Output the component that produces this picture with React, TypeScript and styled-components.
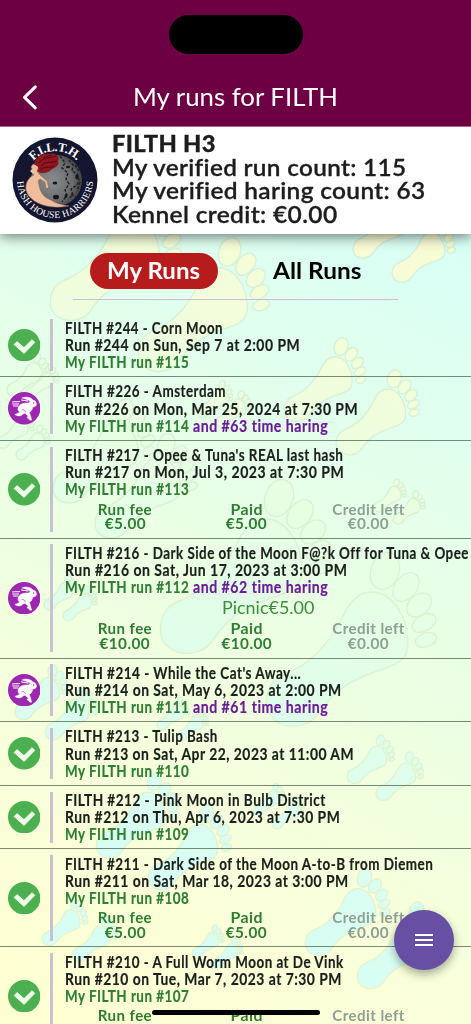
import React, { useLayoutEffect, useRef, useState } from 'react';
import styled, { createGlobalStyle } from 'styled-components';

const GlobalStyle = createGlobalStyle`
  * {
    box-sizing: border-box;
  }

  body {
    margin: 0;
    font-family: Lato, 'Open Sans', sans-serif;
    font-variant-ligatures: none;
    color: #1d1d1d;
  }
`;

const Screen = styled.div`
  position: relative;
  height: 1024px;
  overflow: hidden;
  display: flex;
  flex-direction: column;
  background: linear-gradient(207deg, #d2fffb 8%, #dffff0 32%, #ecffe2 58%, #f9ffda 80%, #ffffd2 98%);
`;

const Backdrop = styled.svg`
  position: absolute;
  top: 0;
  left: 0;
  width: 471px;
  height: 1024px;
`;

const TopBar = styled.header`
  position: relative;
  z-index: 2;
  flex: none;
  height: 127px;
  padding-top: 15px;
  display: flex;
  flex-direction: column;
  align-items: center;
  background: #6d0042;
  border-bottom: 1px solid #a2608a;
`;

const Island = styled.div`
  width: 134px;
  height: 39px;
  border-radius: 20px;
  background: #000;
`;

const NavRow = styled.div`
  width: 100%;
  margin-top: 18.5px;
  height: 48px;
  display: grid;
  grid-template-columns: 60px 1fr 60px;
  align-items: center;
  justify-items: center;
`;

const NavTitle = styled.h1`
  margin: 0;
  font-size: 24.5px;
  font-weight: 400;
  line-height: 30px;
  color: #fff;
`;

const BackIcon = styled.svg`
  width: 20px;
  height: 28px;
  fill: none;
  stroke: #fff;
  stroke-width: 3;
  stroke-linecap: round;
  stroke-linejoin: round;
`;

const Summary = styled.section`
  position: relative;
  z-index: 1;
  flex: none;
  height: 107px;
  padding: 0 12px;
  display: flex;
  align-items: center;
  gap: 14px;
  background: #fff;
  box-shadow: 0 3px 12px rgba(0, 0, 0, 0.5);
`;

const Logo = styled.svg`
  width: 86px;
  height: 86px;
  margin-top: -1px;
  flex: none;
`;

const SummaryText = styled.div`
  padding-bottom: 2.4px;
  display: flex;
  flex-direction: column;
`;

const SummaryLine = styled.div<{ $strong?: boolean }>`
  height: 23.6px;
  line-height: 23.6px;
  font-size: ${({ $strong }) => ($strong ? '23.5px' : '22.5px')};
  font-weight: ${({ $strong }) => ($strong ? 900 : 600)};
  letter-spacing: 0.3px;
  -webkit-text-stroke: ${({ $strong }) => ($strong ? '0.3px' : '0.3px')};
`;

const Tabs = styled.nav`
  position: relative;
  flex: none;
  width: 325px;
  height: 66px;
  margin: 0 auto 13.6px 73px;
  padding: 19px 17px 0;
  display: flex;
  gap: 36px;
  border-bottom: 1px solid #cdbfd6;
`;

const Tab = styled.button<{ $active?: boolean }>`
  height: 36px;
  width: ${({ $active }) => ($active ? '128px' : '126px')};
  padding: 0 0 2px;
  display: flex;
  align-items: center;
  justify-content: ${({ $active }) => ($active ? 'center' : 'flex-start')};
  padding-left: ${({ $active }) => ($active ? '0' : '19px')};
  border: 0;
  border-radius: 18px;
  background: ${({ $active }) => ($active ? '#b71c1c' : 'transparent')};
  color: ${({ $active }) => ($active ? '#fff' : '#000')};
  font: 700 23px/30px Lato, sans-serif;
`;

const RunList = styled.ul`
  position: relative;
  list-style: none;
  margin: 0;
  padding: 0;
`;

const RunRow = styled.li`
  padding: 5.7px 0 5.5px;
  display: grid;
  grid-template-columns: 50.4px 2.4px 1fr;
  align-items: center;
  border-bottom: 1px solid rgba(40, 60, 40, 0.6);
`;

const StatusIcon = styled.svg`
  width: 32.4px;
  height: 32.4px;
  margin-left: 8.1px;
`;

const Rule = styled.div`
  align-self: stretch;
  background: #c8c1cf;
`;

const RunBody = styled.div`
  padding-left: 11.8px;
  margin: -0.5px 0 0.5px;
`;

const RunLine = styled.div`
  height: 17.15px;
  line-height: 17.15px;
  font-size: 16.8px;
  font-weight: 700;
  letter-spacing: 0.6px;
  -webkit-text-stroke: 0.2px;
  color: #1b1f1b;
`;

const RunCount = styled.span`
  color: #2e7d32;
`;

const HareCount = styled.span`
  margin-left: 4px;
  color: #6a1b9a;
`;

const Extra = styled.div`
  height: 22px;
  padding-top: 1.5px;
  line-height: 22px;
  font-size: 16.8px;
  font-weight: 400;
  text-align: center;
  color: #388e3c;
`;

const Fees = styled.div`
  width: 365px;
  margin: 5.1px 0 0 -0.4px;
  display: grid;
  grid-template-columns: repeat(3, 1fr);
`;

const Fee = styled.div<{ $muted?: boolean }>`
  display: flex;
  flex-direction: column;
  align-items: center;
  height: 29.2px;
  font-size: 14.4px;
  line-height: 14.8px;
  font-weight: 700;
  letter-spacing: 0.4px;
  color: ${({ $muted }) => ($muted ? '#8f9f93' : '#2e7d32')};
`;

const MenuButton = styled.button`
  position: absolute;
  z-index: 3;
  left: 394px;
  top: 910px;
  width: 60px;
  height: 60px;
  padding: 0;
  display: grid;
  place-items: center;
  border: 0;
  border-radius: 50%;
  background: #6750a4;
  box-shadow: 0 4px 10px rgba(0, 0, 0, 0.35);
`;

const HomeIndicator = styled.div`
  position: absolute;
  z-index: 4;
  left: 152px;
  top: 1010px;
  width: 168px;
  height: 5px;
  border-radius: 3px;
  background: #000;
`;

const Fitted = styled.span`
  display: inline-block;
  white-space: nowrap;
`;

// Squeezes or stretches a single line of text to the given width.
const Fit: React.FC<{ width: number; center?: boolean; children: React.ReactNode }> = ({
  width,
  center,
  children,
}) => {
  const ref = useRef<HTMLSpanElement>(null);
  const [scale, setScale] = useState(1);
  const [slack, setSlack] = useState(0);

  useLayoutEffect(() => {
    if (ref.current) {
      const natural = ref.current.offsetWidth;
      setScale(width / natural);
      setSlack(width - natural);
    }
  }, [width]);

  return (
    <Fitted
      ref={ref}
      style={{
        transform: `scaleX(${scale})`,
        transformOrigin: center ? 'center' : 'left',
        marginRight: center ? 0 : slack,
      }}
    >
      {children}
    </Fitted>
  );
};

// x, y of the top left corner and the scale of each footprint
const FEET: [number, number, number][] = [
  [50, 187, 0.77],
  [138, 238, 0.77],
  [353, 194, 0.37],
  [392, 218, 0.37],
  [284, 338, 0.48],
  [336, 370, 0.49],
  [7, 353, 0.25],
  [25, 364, 0.2],
  [-3, 410, 0.22],
  [16, 425, 0.2],
  [197, 381, 0.21],
  [216, 391, 0.21],
  [53, 399, 0.6],
  [95, 434, 0.6],
  [374, 479, 0.19],
  [393, 491, 0.19],
  [160, 480, 1],
  [266, 553, 1],
  [44, 575, 0.2],
  [63, 586, 0.2],
  [15, 665, 0.315],
  [45, 686, 0.31],
  [157, 697, 0.19],
  [176, 708, 0.19],
  [347, 735, 0.28],
  [376, 752, 0.28],
  [253, 783, 0.19],
  [272, 796, 0.19],
  [96, 773, 0.49],
  [148, 805, 0.49],
  [42, 899, 0.27],
  [72, 915, 0.27],
  [192, 925, 0.19],
  [211, 936, 0.19],
  [305, 869, 0.5],
  [357, 902, 0.5],
];

const Foot: React.FC = () => (
  <>
    <path
      d="M107 39C126 40 141 62 142 88C143 108 130 112 112 118C82 128 67 139 53 160C43 175 21 178 7 166C-5 154 0 129 17 122C43 112 63 92 77 63C84 48 93 38 107 39Z"
      vectorEffect="non-scaling-stroke"
    />
    <ellipse cx="119" cy="18" rx="14" ry="19" transform="rotate(20 119 18)" vectorEffect="non-scaling-stroke" />
    <ellipse cx="140" cy="34" rx="11" ry="16" transform="rotate(38 140 34)" vectorEffect="non-scaling-stroke" />
    <ellipse cx="153" cy="52" rx="10" ry="14" transform="rotate(48 153 52)" vectorEffect="non-scaling-stroke" />
    <ellipse cx="158" cy="70" rx="8" ry="13" transform="rotate(60 158 70)" vectorEffect="non-scaling-stroke" />
    <ellipse cx="160" cy="87" rx="7" ry="11" transform="rotate(72 160 87)" vectorEffect="non-scaling-stroke" />
  </>
);

const Feet: React.FC = () => (
  <>
    {FEET.map(([x, y, s]) => (
      <g key={`${x}-${y}`} transform={`translate(${x} ${y}) scale(${s})`}>
        <Foot />
      </g>
    ))}
  </>
);

const Footprints: React.FC = () => (
  <Backdrop viewBox="0 0 471 1024">
    <defs>
      <linearGradient id="tread" gradientUnits="userSpaceOnUse" x1="430" y1="180" x2="130" y2="850">
        <stop offset="0" stopColor="#fbfcd3" />
        <stop offset="0.25" stopColor="#f3fdda" />
        <stop offset="0.5" stopColor="#e7fee4" />
        <stop offset="0.7" stopColor="#e0fee9" />
        <stop offset="1" stopColor="#d8fef3" />
      </linearGradient>
      <linearGradient id="edge" x1="0" y1="0" x2="0" y2="1024" gradientUnits="userSpaceOnUse">
        <stop offset="0" stopColor="#a0dcc8" />
        <stop offset="0.5" stopColor="#bcd8ae" />
        <stop offset="1" stopColor="#e8dfa0" />
      </linearGradient>
      <mask id="soles" maskUnits="userSpaceOnUse" x="0" y="0" width="471" height="1024">
        <g fill="#fff">
          <Feet />
        </g>
      </mask>
      <mask id="outlines" maskUnits="userSpaceOnUse" x="0" y="0" width="471" height="1024">
        <g fill="none" stroke="#fff" strokeWidth="1.4">
          <Feet />
        </g>
      </mask>
    </defs>
    <rect width="471" height="1024" fill="url(#tread)" mask="url(#soles)" />
    <rect width="471" height="1024" fill="url(#edge)" opacity="0.32" mask="url(#outlines)" />
  </Backdrop>
);

const KennelLogo: React.FC = () => (
  <Logo viewBox="0 0 86 86">
    <defs>
      <radialGradient id="moon" cx="0.4" cy="0.5" r="0.65">
        <stop offset="0" stopColor="#8b8d8e" />
        <stop offset="0.65" stopColor="#696b6c" />
        <stop offset="1" stopColor="#323435" />
      </radialGradient>
      <path id="arcTop" d="M14 43A29 29 0 0 1 72 43" />
      <path id="arcBottom" d="M5 43A38 38 0 0 0 81 43" />
    </defs>
    <circle cx="43" cy="43" r="42.5" fill="#14152f" />
    <circle cx="44.5" cy="43.5" r="25.5" fill="url(#moon)" />
    <g fill="none" stroke="#202122" strokeWidth="1.4" strokeDasharray="3 1.5">
      <path d="M48 19l5 7-3 5 6 5-2 6 3 5-4 6 2 5-5 7" />
      <path d="M57 23l4 5-1 6 5 3 2 6-2 5-6 4 2 6-5 4" />
      <path d="M63 28l4 6M68 45l-3 9M59 57l5 3" />
    </g>
    <g fill="#17181a">
      <ellipse cx="44" cy="60" rx="3" ry="2.3" />
      <ellipse cx="43" cy="46" rx="2.3" ry="1.5" />
      <ellipse cx="56" cy="30" rx="2" ry="1.3" />
      <ellipse cx="54" cy="59" rx="1.5" ry="2" />
      <ellipse cx="65" cy="40" rx="1.8" ry="2.4" />
      <ellipse cx="36" cy="51" rx="1.4" ry="1" />
    </g>
    <path
      d="M21 27L19 30L20 32L18 34L22 38C15 41 12 49 15 56C20 66 36 73 57 69C49 68 43 66 39 63C32 61 28 55 27 48C26 45 26 43 28 42L33 45L34 51L37 52L35 44L28 38L25 34L27 29Z"
      fill="#eebd9b"
      stroke="#8d6653"
      strokeWidth="0.5"
    />
    <path
      d="M22 27C24 19 31 16 38 17C44 15 48 20 46 24C48 28 43 31 40 32C36 37 28 37 25 34C28 32 26 29 22 27Z"
      fill="#8d1620"
    />
    <path
      d="M27 26C32 19 37 22 44 19M29 29C35 23 38 27 45 24M28 33C34 28 37 32 42 29M31 22C34 18 37 20 40 18"
      fill="none"
      stroke="#50090f"
      strokeWidth="0.9"
    />
    <text fill="#fff" fontFamily="Liberation Serif, serif" fontSize="12.5" fontWeight="700">
      <textPath href="#arcTop" startOffset="50%" textAnchor="middle" textLength="49">
        F.I.L.T.H.
      </textPath>
    </text>
    <text fill="#fff" fontFamily="Liberation Serif, serif" fontSize="9.6">
      <textPath href="#arcBottom" startOffset="50%" textAnchor="middle" textLength="116">
        HASH HOUSE HARRIERS
      </textPath>
    </text>
  </Logo>
);

const CheckBadge: React.FC = () => (
  <StatusIcon viewBox="0 0 32 32">
    <circle cx="16" cy="16" r="16" fill="#4caf50" />
    <path
      d="M6 15.3L8.9 12.4L15.8 18.4L23.8 10.5L26.5 13.2L15.9 24.2Z"
      fill="#eefbe8"
      stroke="#eefbe8"
      strokeWidth="0.8"
      strokeLinejoin="round"
    />
  </StatusIcon>
);

const HareBadge: React.FC = () => (
  <StatusIcon viewBox="0 0 32 32">
    <circle cx="16" cy="16" r="16" fill="#9c27b0" />
    <path
      d="M10.2 14.8C11.6 11.6 15.5 10.6 20.5 10.8L22 8.8C18.6 7.2 16.4 6.6 13.6 5.9C17.5 4 22.8 5.2 24.7 8C27 8.4 28.4 10.3 28.2 12.4C27.8 14.4 26 14.6 24.4 15C24.2 17.3 22.8 19.4 21 20.2L22.3 23.4L23.4 27.8C21.8 28.6 19.4 26.4 18.9 24.8L20.2 24L17 21.2C15.4 20.8 14.6 22 13.2 23.2C11.3 24 8.6 23.8 6.8 22.2L11.8 19.9C9.7 18.8 9.3 16.8 10.2 14.8Z"
      fill="#fff"
      stroke="#fff"
      strokeWidth="0.4"
    />
    <path
      d="M4 9.8C7 9.2 9 10 12 9.4M4.2 11.8H11M5 13.8H10M13 7.6C15.5 8.8 17.5 8 20 9.2"
      fill="none"
      stroke="#fff"
      strokeWidth="1"
    />
    <circle cx="25.3" cy="10.9" r="0.7" fill="#9c27b0" />
    <path d="M13.5 17.5C15.5 17 17 18 17.2 20" fill="none" stroke="#9c27b0" strokeWidth="0.6" />
  </StatusIcon>
);

interface Run {
  title: string;
  titleWidth: number;
  date: string;
  dateWidth: number;
  count: string;
  hare?: string;
  extra?: string;
  fee?: string;
}

const RUNS: Run[] = [
  {
    title: 'FILTH #244 - Corn Moon',
    titleWidth: 158,
    date: 'Run #244 on Sun, Sep 7 at 2:00 PM',
    dateWidth: 235.5,
    count: 'My FILTH run #115',
  },
  {
    title: 'FILTH #226 - Amsterdam',
    titleWidth: 161,
    date: 'Run #226 on Mon, Mar 25, 2024 at 7:30 PM',
    dateWidth: 293.5,
    count: 'My FILTH run #114',
    hare: 'and #63 time haring',
  },
  {
    title: "FILTH #217 - Opee & Tuna's REAL last hash",
    titleWidth: 278,
    date: 'Run #217 on Mon, Jul 3, 2023 at 7:30 PM',
    dateWidth: 279,
    count: 'My FILTH run #113',
    fee: '€5.00',
  },
  {
    title: 'FILTH #216 - Dark Side of the Moon F@?k Off for Tuna & Opee',
    titleWidth: 404,
    date: 'Run #216 on Sat, Jun 17, 2023 at 3:00 PM',
    dateWidth: 282.5,
    count: 'My FILTH run #112',
    hare: 'and #62 time haring',
    extra: 'Picnic€5.00',
    fee: '€10.00',
  },
  {
    title: "FILTH #214 - While the Cat's Away...",
    titleWidth: 236.5,
    date: 'Run #214 on Sat, May 6, 2023 at 2:00 PM',
    dateWidth: 277,
    count: 'My FILTH run #111',
    hare: 'and #61 time haring',
  },
  {
    title: 'FILTH #213 - Tulip Bash',
    titleWidth: 153,
    date: 'Run #213 on Sat, Apr 22, 2023 at 11:00 AM',
    dateWidth: 289,
    count: 'My FILTH run #110',
  },
  {
    title: 'FILTH #212 - Pink Moon in Bulb District',
    titleWidth: 260.5,
    date: 'Run #212 on Thu, Apr 6, 2023 at 7:30 PM',
    dateWidth: 275,
    count: 'My FILTH run #109',
  },
  {
    title: 'FILTH #211 - Dark Side of the Moon A-to-B from Diemen',
    titleWidth: 368,
    date: 'Run #211 on Sat, Mar 18, 2023 at 3:00 PM',
    dateWidth: 284,
    count: 'My FILTH run #108',
    fee: '€5.00',
  },
  {
    title: 'FILTH #210 - A Full Worm Moon at De Vink',
    titleWidth: 279,
    date: 'Run #210 on Tue, Mar 7, 2023 at 7:30 PM',
    dateWidth: 277,
    count: 'My FILTH run #107',
    fee: '€5.00',
  },
];

const RunItem: React.FC<{ run: Run }> = ({ run }) => (
  <RunRow>
    {run.hare ? <HareBadge /> : <CheckBadge />}
    <Rule />
    <RunBody>
      <RunLine>
        <Fit width={run.titleWidth}>{run.title}</Fit>
      </RunLine>
      <RunLine>
        <Fit width={run.dateWidth}>{run.date}</Fit>
      </RunLine>
      <RunLine>
        <RunCount>
          <Fit width={124}>{run.count}</Fit>
        </RunCount>
        {run.hare && (
          <HareCount>
            <Fit width={135.5}>{run.hare}</Fit>
          </HareCount>
        )}
      </RunLine>
      {run.extra && (
        <Extra>
          <Fit width={92} center>
            {run.extra}
          </Fit>
        </Extra>
      )}
      {run.fee && (
        <Fees>
          <Fee>
            <Fit width={54.5} center>Run fee</Fit>
            <Fit width={run.fee.length > 5 ? 51 : 41.5} center>{run.fee}</Fit>
          </Fee>
          <Fee>
            <Fit width={32} center>Paid</Fit>
            <Fit width={run.fee.length > 5 ? 51 : 41.5} center>{run.fee}</Fit>
          </Fee>
          <Fee $muted>
            <Fit width={72.5} center>Credit left</Fit>
            <Fit width={41.5} center>€0.00</Fit>
          </Fee>
        </Fees>
      )}
    </RunBody>
  </RunRow>
);

const App: React.FC = () => (
  <>
    <GlobalStyle />
    <Screen>
      <Footprints />
      <TopBar>
        <Island />
        <NavRow>
          <BackIcon viewBox="0 0 20 28">
            <path d="M15.3 3.8L4.5 14.3L15.3 24.8" />
          </BackIcon>
          <NavTitle>
            <Fit width={205} center>My runs for FILTH</Fit>
          </NavTitle>
        </NavRow>
      </TopBar>

      <Summary>
        <KennelLogo />
        <SummaryText>
          <SummaryLine $strong>
            <Fit width={104}>FILTH H3</Fit>
          </SummaryLine>
          <SummaryLine>
            <Fit width={294}>My verified run count: 115</Fit>
          </SummaryLine>
          <SummaryLine>
            <Fit width={314}>My verified haring count: 63</Fit>
          </SummaryLine>
          <SummaryLine>
            <Fit width={226}>Kennel credit: €0.00</Fit>
          </SummaryLine>
        </SummaryText>
      </Summary>

      <Tabs>
        <Tab $active>
          <Fit width={93} center>My Runs</Fit>
        </Tab>
        <Tab>
          <Fit width={88}>All Runs</Fit>
        </Tab>
      </Tabs>

      <RunList>
        {RUNS.map((run) => (
          <RunItem key={run.title} run={run} />
        ))}
      </RunList>

      <MenuButton aria-label="Menu">
        <svg width="18" height="12" viewBox="0 0 18 12">
          <path d="M0 1H18M0 6H18M0 11H18" stroke="#fff" strokeWidth="2" />
        </svg>
      </MenuButton>
      <HomeIndicator />
    </Screen>
  </>
);

export default App;
